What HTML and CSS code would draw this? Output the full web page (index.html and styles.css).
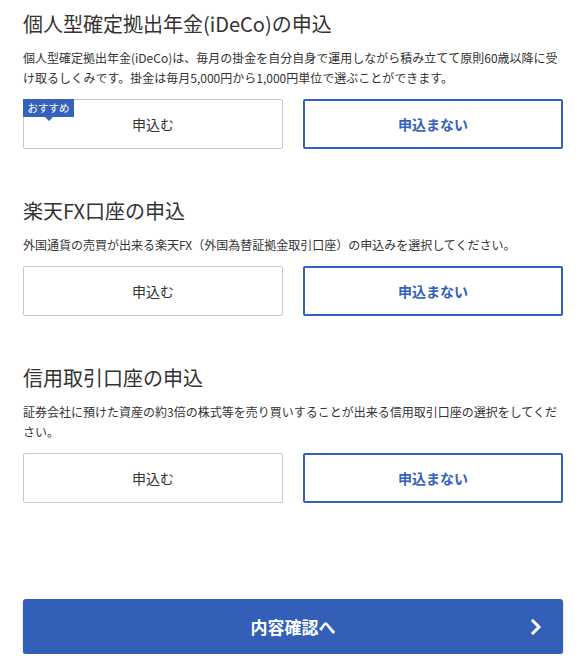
FILE: index.html
```html
<!DOCTYPE html>
<html lang="ja">
<head>
<meta charset="utf-8">
<title>申込</title>
<link rel="stylesheet" href="styles.css">
</head>
<body>
<main class="page">
  <section class="section">
    <h2 class="title">個人型確定拠出年金(iDeCo)の申込</h2>
    <p class="desc">個人型確定拠出年金(iDeCo)は、毎月の掛金を自分自身で運用しながら積み立てて原則60歳以降に受け取るしくみです。掛金は毎月5,000円から1,000円単位で選ぶことができます。</p>
    <div class="choices">
      <button class="choice">
        <span class="badge">おすすめ</span>
        申込む
      </button>
      <button class="choice choice--selected">申込まない</button>
    </div>
  </section>
  <section class="section">
    <h2 class="title">楽天FX口座の申込</h2>
    <p class="desc">外国通貨の売買が出来る楽天FX（外国為替証拠金取引口座）の申込みを選択してください。</p>
    <div class="choices">
      <button class="choice">申込む</button>
      <button class="choice choice--selected">申込まない</button>
    </div>
  </section>
  <section class="section">
    <h2 class="title">信用取引口座の申込</h2>
    <p class="desc">証券会社に預けた資産の約3倍の株式等を売り買いすることが出来る信用取引口座の選択をしてください。</p>
    <div class="choices">
      <button class="choice">申込む</button>
      <button class="choice choice--selected">申込まない</button>
    </div>
  </section>
  <button class="cta">
    <span class="cta-label">内容確認へ</span>
    <svg class="cta-icon" width="12" height="16" viewBox="0 0 12 16" aria-hidden="true">
      <polyline points="3,2 9,8 3,14" fill="none" stroke="#fff" stroke-width="3" stroke-linecap="square" stroke-linejoin="miter"/>
    </svg>
  </button>
</main>
</body>
</html>
```
FILE: styles.css
```css
* { box-sizing: border-box; }
html, body { margin: 0; padding: 0; background: #fff; }
body {
  font-family: "Noto Sans CJK JP", "Noto Sans", sans-serif;
  color: #333;
}
.page {
  width: 540px;
  margin-left: 23px;
  padding-top: 9px;
  display: flex;
  flex-direction: column;
}
.section { display: flex; flex-direction: column; margin-bottom: 47px; }
.title {
  margin: 0;
  font-size: 20px;
  line-height: 30px;
  font-weight: 400;
  color: #333;
}
.desc {
  margin: 9px 0 11px;
  font-size: 12px;
  line-height: 20px;
  color: #333;
}
.choices {
  display: grid;
  grid-template-columns: 1fr 1fr;
  gap: 20px;
}
.choice {
  position: relative;
  height: 50px;
  background: #fff;
  border: 1px solid #c8c8c8;
  border-radius: 2px;
  font-family: inherit;
  font-size: 14px;
  color: #333;
  padding: 0;
}
.choice--selected {
  border: 2px solid #3561ba;
  color: #3561ba;
  font-weight: 700;
}
.badge {
  position: absolute;
  top: -1px;
  left: -1px;
  width: 51px;
  height: 18px;
  background: #3561ba;
  color: #fff;
  font-size: 10.5px;
  line-height: 18px;
  text-align: center;
}
.badge::after {
  content: "";
  position: absolute;
  left: 50%;
  bottom: -4px;
  margin-left: -4px;
  border-left: 4px solid transparent;
  border-right: 4px solid transparent;
  border-top: 4px solid #3561ba;
}
.cta {
  position: relative;
  margin-top: 49px;
  height: 55px;
  background: #335fb8;
  border: none;
  border-radius: 3px;
  box-shadow: 0 1px 2px rgba(0,0,0,0.25);
  color: #fff;
  font-family: inherit;
  font-size: 17px;
  font-weight: 700;
  display: flex;
  align-items: center;
  justify-content: center;
  padding: 0;
}
.cta-icon {
  position: absolute;
  right: 21px;
  top: 50%;
  margin-top: -8px;
}
```
